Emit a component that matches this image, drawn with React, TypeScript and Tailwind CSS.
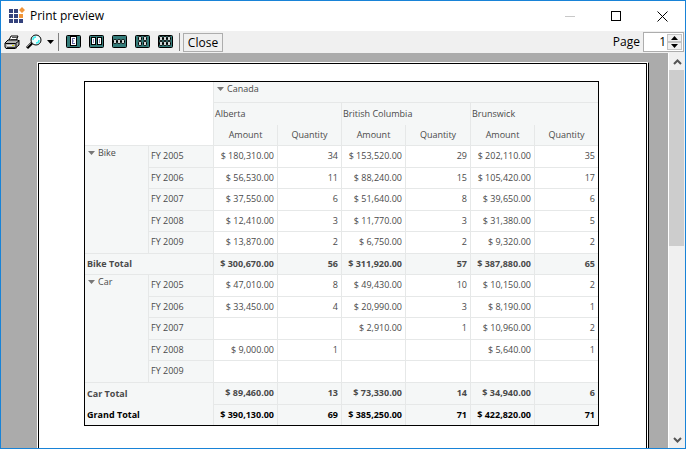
import React from 'react';

type Row = { label: string; cells: string[] };

const bike: Row[] = [
  { label: 'FY 2005', cells: ['$ 180,310.00', '34', '$ 153,520.00', '29', '$ 202,110.00', '35'] },
  { label: 'FY 2006', cells: ['$ 56,530.00', '11', '$ 88,240.00', '15', '$ 105,420.00', '17'] },
  { label: 'FY 2007', cells: ['$ 37,550.00', '6', '$ 51,640.00', '8', '$ 39,650.00', '6'] },
  { label: 'FY 2008', cells: ['$ 12,410.00', '3', '$ 11,770.00', '3', '$ 31,380.00', '5'] },
  { label: 'FY 2009', cells: ['$ 13,870.00', '2', '$ 6,750.00', '2', '$ 9,320.00', '2'] },
];

const car: Row[] = [
  { label: 'FY 2005', cells: ['$ 47,010.00', '8', '$ 49,430.00', '10', '$ 10,150.00', '2'] },
  { label: 'FY 2006', cells: ['$ 33,450.00', '4', '$ 20,990.00', '3', '$ 8,190.00', '1'] },
  { label: 'FY 2007', cells: ['', '', '$ 2,910.00', '1', '$ 10,960.00', '2'] },
  { label: 'FY 2008', cells: ['$ 9,000.00', '1', '', '', '$ 5,640.00', '1'] },
  { label: 'FY 2009', cells: ['', '', '', '', '', ''] },
];

const line = 'border-[#e6e8e8]';
const head = 'bg-[#f5f7f7] font-normal';

function Caret() {
  return (
    <svg width="7" height="4" viewBox="0 0 7 4" className="mr-[3px] mb-px inline-block" aria-hidden="true">
      <path d="M0 0h7L3.5 4z" fill="#777" />
    </svg>
  );
}

function Cells({ cells, className = '' }: { cells: string[]; className?: string }) {
  return (
    <>
      {cells.map((c, i) => (
        <td key={i} className={`border-b ${line} ${i < 5 ? 'border-r' : ''} px-[3px] pb-px text-right ${className}`}>
          {c}
        </td>
      ))}
    </>
  );
}

function Group({ name, rows }: { name: string; rows: Row[] }) {
  return (
    <>
      {rows.map((r, i) => (
        <tr key={r.label} className="h-[21px] odd:h-[22px]">
          {i === 0 && (
            <th scope="rowgroup" rowSpan={5} className={`border-r border-b ${line} ${head} px-[3px] text-left align-top`}>
              <Caret />
              {name}
            </th>
          )}
          <th scope="row" className={`border-r border-b ${line} ${head} px-[2px] pb-px text-left`}>{r.label}</th>
          <Cells cells={r.cells} />
        </tr>
      ))}
    </>
  );
}

function Total({ name, cells, height, grand = false }: { name: string; cells: string[]; height: string; grand?: boolean }) {
  const last = grand ? 'border-b-0 text-black' : '';
  return (
    <tr className={`${height} bg-[#f5f7f7] font-bold`}>
      <th scope="row" colSpan={2} className={`border-r ${name === 'Bike Total' ? 'border-b' : ''} ${line} px-[2px] pb-px text-left ${last}`}>
        {name}
      </th>
      <Cells cells={cells} className={last} />
    </tr>
  );
}

function PivotTable() {
  return (
    <table className="w-[515px] table-fixed border-separate border-spacing-0 border border-black text-[9px] leading-[14px] text-[#4a4a4a]">
      <colgroup>
        <col className="w-[64px]" />
        <col className="w-[65px]" />
        <col className="w-[64px]" />
        <col className="w-[64px]" />
        <col className="w-[64px]" />
        <col className="w-[65px]" />
        <col className="w-[64px]" />
        <col />
      </colgroup>
      <thead>
        <tr className="h-[21px]">
          <td colSpan={2} rowSpan={3} className={`border-r border-b ${line}`} />
          <th scope="colgroup" colSpan={6} className={`border-b ${line} ${head} px-[3px] text-left align-top`}>
            <Caret />
            Canada
          </th>
        </tr>
        <tr className="h-[22px]">
          {['Alberta', 'British Columbia', 'Brunswick'].map((n, i) => (
            <th key={n} scope="colgroup" colSpan={2} className={`${i < 2 ? 'border-r' : ''} ${line} ${head} px-px pb-px text-left`}>
              {n}
            </th>
          ))}
        </tr>
        <tr className="h-[21px]">
          {['Amount', 'Quantity', 'Amount', 'Quantity', 'Amount', 'Quantity'].map((n, i) => (
            <th key={i} scope="col" className={`border-b ${i < 5 ? 'border-r' : ''} ${line} ${head} text-center`}>
              {n}
            </th>
          ))}
        </tr>
      </thead>
      <tbody>
        <Group name="Bike" rows={bike} />
        <Total height="h-[21px]" name="Bike Total" cells={['$ 300,670.00', '56', '$ 311,920.00', '57', '$ 387,880.00', '65']} />
        <Group name="Car" rows={car} />
        <Total height="h-[22px]" name="Car Total" cells={['$ 89,460.00', '13', '$ 73,330.00', '14', '$ 34,940.00', '6']} />
        <Total height="h-[20px]" grand name="Grand Total" cells={['$ 390,130.00', '69', '$ 385,250.00', '71', '$ 422,820.00', '71']} />
      </tbody>
    </table>
  );
}

function AppLogo() {
  return (
    <svg width="16" height="16" viewBox="0 0 16 16" aria-hidden="true" className="overflow-visible">
      <path fill="#34427c" d="M0 1h4v4H0zM5 1h4v4H5zM0 6h4v4H0zM5 6h4v4H5zM0 11h4v4H0zM5 11h4v4H5zM10 11h4v4h-4z" />
      <path fill="#f0953a" d="M10 6h4v4h-4zM13 -1l3 3-3 3-3-3z" />
    </svg>
  );
}

function PrinterIcon() {
  return (
    <svg width="17" height="15" viewBox="0 0 17 15" aria-hidden="true">
      <path d="M5 5L7 1h7l-2 5z" fill="#fff" stroke="#000" />
      <path d="M8 2.500h5M7 4.500h5" stroke="#555" />
      <path d="M1 8l3-3h10l1 1v4l-4 3.500H2L1 12z" fill="#b4b4b4" stroke="#000" />
      <path d="M1.500 8.500h10l4-3M12 8.500v5" fill="none" stroke="#000" />
      <path d="M3 10.500h7" stroke="#eee" />
      <path d="M8 10.500h2" stroke="#d8d800" />
      <path d="M3 12.500h8" stroke="#333" />
    </svg>
  );
}

function ZoomIcon() {
  return (
    <svg width="16" height="16" viewBox="0 0 16 16" aria-hidden="true">
      <path d="M6 9l-5 5" stroke="#000" strokeWidth="3" />
      <path d="M5 9l-4 4" stroke="#888" strokeWidth="1" />
      <circle cx="10" cy="6" r="5" fill="#eff" stroke="#000" />
      <path d="M7 6a3 3 0 0 1 3-3M10 9a3 3 0 0 0 3-3" fill="none" stroke="#3ee" strokeWidth="1.5" />
    </svg>
  );
}

type Rect = [number, number, number, number];
const layouts: { label: string; pages: Rect[] }[] = [
  { label: 'One page', pages: [[5, 2, 6, 9]] },
  { label: 'Two pages', pages: [[3, 3, 4, 7], [9, 3, 4, 7]] },
  { label: 'Three pages', pages: [[2, 5, 3, 4], [6, 5, 3, 4], [10, 5, 3, 4]] },
  { label: 'Four pages', pages: [[4, 2, 3, 4], [9, 2, 3, 4], [4, 7, 3, 4], [9, 7, 3, 4]] },
  { label: 'Six pages', pages: [[2, 2, 3, 4], [6, 2, 3, 4], [10, 2, 3, 4], [2, 7, 3, 4], [6, 7, 3, 4], [10, 7, 3, 4]] },
];

function LayoutIcon({ pages }: { pages: Rect[] }) {
  const small = pages.length > 2;
  return (
    <svg width="16" height="14" viewBox="0 0 16 14" aria-hidden="true">
      <rect x="0.5" y="0.5" width="14" height="12" rx="1" fill="#347c7a" stroke="#000" />
      {pages.map(([x, y, w, h], i) => (
        <g key={i}>
          <rect x={x - 0.5} y={y - 0.5} width={w} height={h} rx={small ? 1 : 0} fill={small ? '#d4dada' : '#fff'} stroke="#000" />
          {pages.length === 1 && <path d="M6.500 3v6M6 3.500h3M6 6h2M6 8.500h3" stroke="#6464a0" fill="none" />}
          {pages.length === 2 && <path d={`M${x + 1.5} 4v4`} stroke="#8888bb" />}
        </g>
      ))}
    </svg>
  );
}

function Chevron({ down = false }: { down?: boolean }) {
  return (
    <svg width="9" height="6" viewBox="0 0 9 6" aria-hidden="true">
      <path d={down ? 'M1 1l3.500 3.500L8 1' : 'M1 5l3.500-3.500L8 5'} fill="none" stroke="#555" strokeWidth="2" />
    </svg>
  );
}

export default function App() {
  return (
    <div className="flex h-screen flex-col border border-[#1883d7] bg-white font-['Open_Sans','Noto_Sans',sans-serif] text-[12px] text-black">
      <header className="flex h-[30px] shrink-0 items-center pl-2">
        <AppLogo />
        <h1 className="ml-[5px] flex-1">Print preview</h1>
        <button aria-label="Minimize" className="flex h-full w-[46px] items-center justify-center">
          <span className="h-px w-[10px] bg-[#c8c8c8]" />
        </button>
        <button aria-label="Maximize" className="flex h-full w-[46px] items-center justify-center">
          <span className="size-[10px] border border-black" />
        </button>
        <button aria-label="Close window" className="flex h-full w-[46px] items-center justify-center">
          <svg width="11" height="11" viewBox="0 0 11 11" aria-hidden="true">
            <path d="M.5.5l10 10M10.500.5l-10 10" stroke="#000" />
          </svg>
        </button>
      </header>

      <div className="flex h-[22px] shrink-0 items-center bg-[#f0f0f0] pr-px pl-[3px]">
        <button aria-label="Print"><PrinterIcon /></button>
        <button aria-label="Zoom" className="ml-[5px] flex items-center gap-[5px]">
          <ZoomIcon />
          <svg width="7" height="4" viewBox="0 0 7 4" aria-hidden="true"><path d="M0 0h7L3.500 4z" /></svg>
        </button>
        <span className="mr-[7px] ml-1 h-[18px] w-px bg-[#808080]" />
        <div className="flex gap-[7px]">
          {layouts.map((l) => (
            <button key={l.label} aria-label={l.label}><LayoutIcon pages={l.pages} /></button>
          ))}
        </div>
        <span className="mr-[3px] ml-[5px] h-[18px] w-px bg-[#808080]" />
        <button className="h-[19px] w-10 border border-[#adadad] bg-[#f0f0f0] leading-[17px]">Close</button>
        <label htmlFor="page" className="mr-[3px] ml-auto">Page</label>
        <div className="flex h-5 w-[41px] border border-[#adadad] bg-white p-px">
          <input id="page" defaultValue="1" className="w-[22px] min-w-0 flex-1 pr-px text-right outline-none" />
          <div className="flex w-[15px] flex-col">
            <button aria-label="Next page" className="flex flex-1 items-center justify-center border border-[#c4c4c4] bg-[#f0f0f0]">
              <svg width="7" height="4" viewBox="0 0 7 4" aria-hidden="true"><path d="M0 4h7L3.500 0z" /></svg>
            </button>
            <button aria-label="Previous page" className="flex flex-1 items-center justify-center border border-[#c4c4c4] bg-[#f0f0f0]">
              <svg width="7" height="4" viewBox="0 0 7 4" aria-hidden="true"><path d="M0 0h7L3.500 4z" /></svg>
            </button>
          </div>
        </div>
      </div>

      <div className="flex min-h-0 flex-1 bg-[#ababab]">
        <main className="min-w-0 flex-1 overflow-hidden pt-[9px] pr-[19px] pl-9">
          <div className="border-t border-r border-l border-t-white border-r-black border-l-white">
            <div className="border-r border-r-white">
              <div className="h-[640px] border border-black bg-white pt-[17px] pl-[45px]">
                <PivotTable />
              </div>
            </div>
          </div>
        </main>
        <div className="flex w-[17px] shrink-0 flex-col border-l border-white bg-[#f0f0f0]">
          <button aria-label="Scroll up" className="flex h-[17px] items-center justify-center"><Chevron /></button>
          <div className="flex-1"><div className="mr-px h-[176px] bg-[#cdcdcd]" /></div>
          <button aria-label="Scroll down" className="flex h-[17px] items-center justify-center"><Chevron down /></button>
        </div>
      </div>
    </div>
  );
}
